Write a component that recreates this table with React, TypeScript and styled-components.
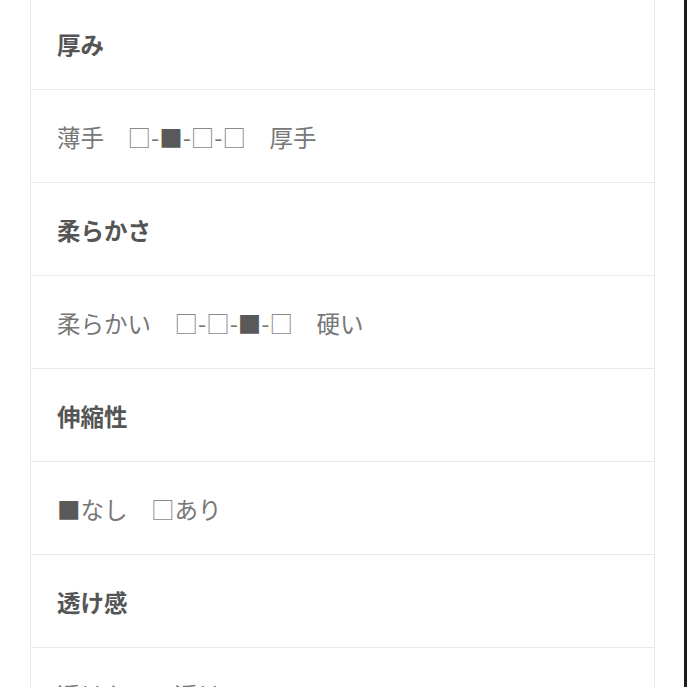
import React from "react";
import styled, { createGlobalStyle } from "styled-components";

const Global = createGlobalStyle`
  html, body { margin: 0; padding: 0; background: #ffffff; overflow: hidden; }
  body { font-family: "Noto Sans CJK JP", "Noto Sans", sans-serif; }
`;

const Page = styled.div`
  width: 687px;
  height: 687px;
  box-sizing: border-box;
  overflow: hidden;
  padding-left: 30px;
  border-right: 3px solid #1c1c1c;
  background: #ffffff;
`;

const Table = styled.div`
  width: 625px;
  margin-top: -4px;
  box-sizing: border-box;
  border-left: 1px solid #e8e8e8;
  border-right: 1px solid #e8e8e8;
  display: flex;
  flex-direction: column;
`;

const Row = styled.div<{ $head?: boolean }>`
  height: 93px;
  box-sizing: border-box;
  border-top: 1px solid #e9e9e9;
  display: flex;
  align-items: center;
  padding: 2px 0 0 26px;
  font-size: 23.5px;
  font-weight: ${(p) => (p.$head ? 700 : 400)};
  color: ${(p) => (p.$head ? "#555555" : "#777777")};
  background: #ffffff;
  white-space: pre;
`;

const Box = styled.span<{ $on?: boolean }>`
  color: ${(p) => (p.$on ? "#595959" : "#8a8a8a")};
`;

const Scale = ({ pos, n }: { pos: number; n: number }) => (
  <>
    {Array.from({ length: n }).map((_, i) => (
      <React.Fragment key={i}>
        {i > 0 && "-"}
        <Box $on={i === pos}>{i === pos ? "■" : "□"}</Box>
      </React.Fragment>
    ))}
  </>
);

export default function App() {
  return (
    <>
      <Global />
      <Page>
        <Table>
          <Row $head>厚み</Row>
          <Row>
            薄手{"　"}
            <Scale pos={1} n={4} />
            {"　"}厚手
          </Row>
          <Row $head>柔らかさ</Row>
          <Row>
            柔らかい{"　"}
            <Scale pos={2} n={4} />
            {"　"}硬い
          </Row>
          <Row $head>伸縮性</Row>
          <Row>
            <Box $on>■</Box>なし{"　"}<Box>□</Box>あり
          </Row>
          <Row $head>透け感</Row>
          <Row>
            透けない{"　"}透ける
          </Row>
        </Table>
      </Page>
    </>
  );
}
